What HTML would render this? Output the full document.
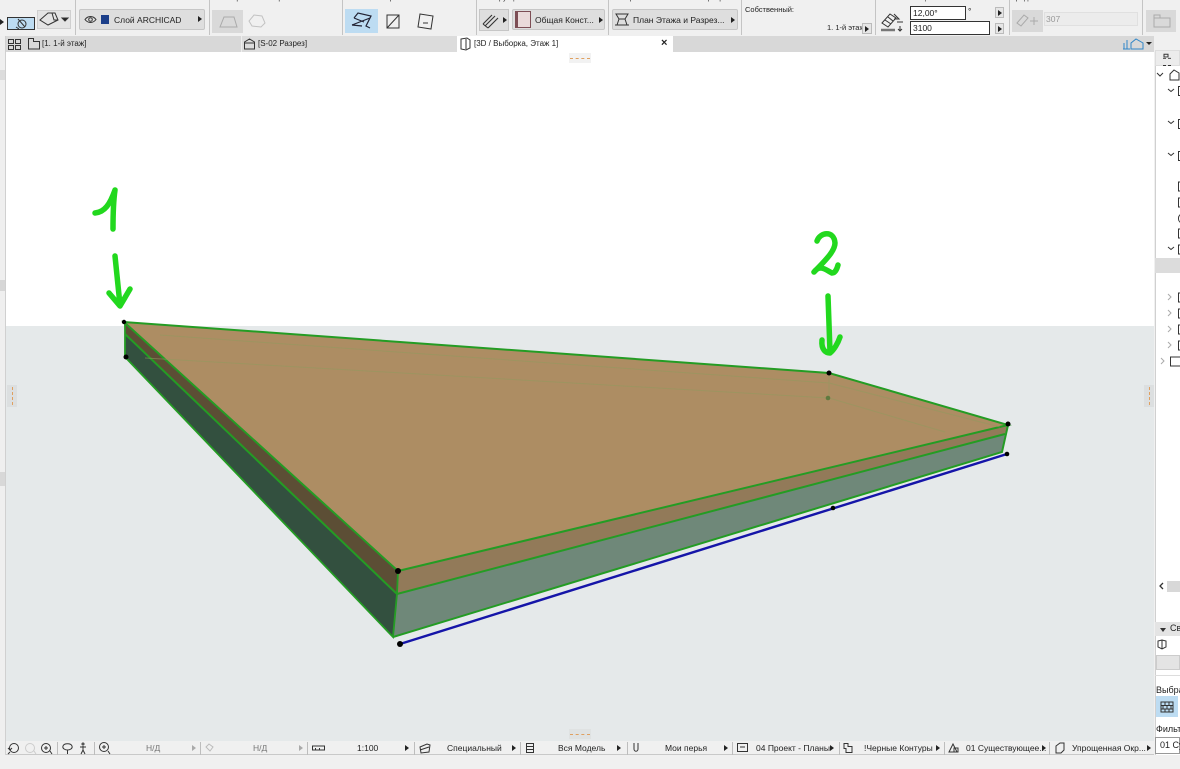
<!DOCTYPE html>
<html lang="ru"><head><meta charset="utf-8"><title>Archicad</title>
<style>
html,body{margin:0;padding:0;background:#f0f0f0}
#p{position:relative;width:1180px;height:769px;overflow:hidden;background:#f0f0f0;font-family:"Liberation Sans","Noto Sans CJK SC",sans-serif;color:#222}
#p div{position:absolute;box-sizing:border-box;white-space:nowrap}
.sep{width:1px;background:#c4c4c4;top:0;height:35px}
.btn{background:#dedede;border:1px solid #c6c6c6;border-radius:2px;font-size:8.5px;line-height:20px;height:21px;top:9px}
.t{font-size:8.5px;line-height:11px}
.l{font-size:7.5px;line-height:10px;top:-7px;color:#333}
.ar{width:0;height:0;border-left:4px solid #222;border-top:3px solid transparent;border-bottom:3px solid transparent}
.sb{width:1px;background:#bdbdbd;top:742px;height:13px}
svg{position:absolute;overflow:visible}
</style></head><body><div id="p">
<!-- toolbar -->
<div class="sep" style="left:75px"></div><div class="sep" style="left:209px"></div><div class="sep" style="left:342px"></div><div class="sep" style="left:476px"></div><div class="sep" style="left:608px"></div><div class="sep" style="left:741px"></div><div class="sep" style="left:875px"></div><div class="sep" style="left:1009px"></div><div class="sep" style="left:1142px"></div>
<div class="l" style="left:80px">Слой:</div><div class="l" style="left:212px">Геометрический вариант:</div><div class="l" style="left:346px">Способ построения:</div><div class="l" style="left:479px">Конструкция:</div><div class="l" style="left:612px">Отображение на плане и в разрезе:</div><div class="l" style="left:745px">Связанный этаж:</div><div class="l" style="left:878px">Уклон и смещение основания:</div><div class="l" style="left:1012px">Градиент:</div><div class="l" style="left:1146px">Базовая:</div>
<div class="ar" style="left:0;top:19px"></div>
<div style="left:7px;top:17px;width:28px;height:13px;background:#bddcf2;border:1px solid #333"></div>
<svg style="left:7px;top:17px" width="28" height="13" fill="none" stroke="#333"><circle cx="15" cy="7" r="4"/><path d="M11 2l7 8M9 10l3 2"/></svg>
<div style="left:37px;top:10px;width:34px;height:19px;background:#e4e4e4;border:1px solid #cfcfcf"></div>
<svg style="left:37px;top:10px" width="34" height="19" fill="none" stroke="#333"><path d="M3 10l8-7h7l3 7-10 5z"/><path d="M15 3l2 7h4"/><path d="M25 8l3 3 3-3z" fill="#222"/></svg>
<div class="btn" style="left:79px;width:126px;padding-left:34px">Слой ARCHICAD</div>
<svg style="left:79px;top:9px" width="36" height="21" fill="none" stroke="#333"><path d="M6 10.500c3-4 8-4 11 0c-3 4-8 4-11 0z"/><circle cx="11.500" cy="10.500" r="1.800"/><rect x="22" y="6" width="8" height="9" fill="#1c3f8a" stroke="none"/></svg>
<div class="ar" style="left:198px;top:16px"></div>
<div style="left:212px;top:10px;width:31px;height:23px;background:#d9d9d9"></div>
<svg style="left:212px;top:10px" width="60" height="22" fill="none" stroke="#aaa"><path d="M8 17l4-10h10l3 10z"/><path d="M40 16l-3-5 5-6 8 1 3 7-4 4z" stroke="#c2c2c2"/></svg>
<div style="left:345px;top:9px;width:33px;height:24px;background:#bddcf2"></div>
<svg style="left:345px;top:9px" width="33" height="24" fill="none" stroke="#223" stroke-width="1.200"><path d="M9 9l4-5 13 3-5 10 4 2M7 16l18-7M9 9l10 4M7 16l10 1"/></svg>
<svg style="left:383px;top:9px" width="55" height="24" fill="none" stroke="#333"><path d="M4 6h12v13H4zM4 19L16 6"/><path d="M37 5l13 2-2 13-13-2zM40 14h5"/></svg>
<div style="left:479px;top:9px;width:30px;height:22px;background:#dedede;border:1px solid #c6c6c6"></div>
<div class="ar" style="left:503px;top:17px"></div>
<svg style="left:479px;top:9px" width="24" height="22" fill="none" stroke="#333" stroke-width="1.100"><path d="M4 15l9-9M6 17l10-10M9 19l10-10M4 15l5 4"/></svg>
<div class="btn" style="left:512px;width:93px;padding-left:22px">Общая Конст...</div>
<div style="left:515px;top:11px;width:16px;height:17px;background:#eadada;border:1px solid #7d4e55;border-left-width:3px"></div>
<div class="ar" style="left:599px;top:17px"></div>
<div class="btn" style="left:612px;width:126px;padding-left:20px">План Этажа и Разрез...</div>
<svg style="left:612px;top:9px" width="20" height="21" fill="none" stroke="#333"><path d="M4 5h12l-3 5H7zM3 16h14M7 10l-2 6M13 10l2 6"/></svg>
<div class="ar" style="left:731px;top:17px"></div>
<div class="t" style="left:745px;top:4px;font-size:7.5px">Собственный:</div>
<div class="t" style="left:827px;top:22px;font-size:7.5px">1. 1-й этаж</div>
<div style="left:862px;top:23px;width:10px;height:11px;background:#e6e6e6;border:1px solid #bbb"></div><div class="ar" style="left:865px;top:26px"></div>
<svg style="left:878px;top:8px" width="30" height="28" fill="none" stroke="#333"><path d="M4 15l8-9 6 4-8 9zM7 12l6 4M10 9l5 4"/><path d="M16 6l5 5h-5M19 14h6"/><path d="M3 22h14" stroke="#777" stroke-width="2.500"/><path d="M22 18v5M20 21l2 2 2-2"/></svg>
<div style="left:910px;top:6px;width:56px;height:14px;background:#fff;border:1px solid #333;font-size:8.5px;line-height:12px;padding-left:2px">12,00°</div>
<div style="left:910px;top:21px;width:80px;height:14px;background:#fff;border:1px solid #333;font-size:8.5px;line-height:12px;padding-left:2px">3100</div>
<div class="t" style="left:968px;top:6px">°</div>
<div style="left:995px;top:7px;width:9px;height:11px;background:#e6e6e6;border:1px solid #bbb"></div><div class="ar" style="left:998px;top:10px"></div>
<div style="left:995px;top:23px;width:9px;height:11px;background:#e6e6e6;border:1px solid #bbb"></div><div class="ar" style="left:998px;top:26px"></div>
<div style="left:1012px;top:10px;width:31px;height:22px;background:#d9d9d9"></div>
<svg style="left:1012px;top:10px" width="31" height="22" fill="none" stroke="#aaa"><path d="M5 13l7-8 4 3-7 8zM18 11h8M22 7v8"/></svg>
<div style="left:1044px;top:12px;width:94px;height:14px;background:#ececec;border:1px solid #e0e0e0;font-size:8.5px;line-height:12px;color:#999;padding-left:1px">307</div>
<div style="left:1146px;top:10px;width:30px;height:22px;background:#d9d9d9"></div>
<svg style="left:1146px;top:10px" width="30" height="22" fill="none" stroke="#aaa"><path d="M8 8h16v9H8zM8 8V5h6v3"/></svg>
<!-- tabs -->
<div style="left:6px;top:36px;width:1149px;height:16px;background:#d8d8d8"></div>
<div style="left:241px;top:36px;width:216px;height:16px;background:#dcdcdc;border-left:1px solid #eee"></div>
<div style="left:457px;top:36px;width:216px;height:16px;background:#fff"></div>
<div class="t" style="left:42px;top:38px;font-size:8px">[1. 1-й этаж]</div>
<div class="t" style="left:258px;top:38px;font-size:8px">[S-02 Разрез]</div>
<div class="t" style="left:474px;top:38px;font-size:8px">[3D / Выборка, Этаж 1]</div>
<div style="left:661px;top:37px;font-size:11px;line-height:12px;font-weight:700">×</div>
<svg style="left:0;top:36px" width="480" height="16" fill="none" stroke="#333"><path d="M8.500 3.500h5v4h-5zM15.500 3.500h5v4h-5zM8.500 9.500h5v4h-5zM15.500 9.500h5v4h-5zM28.500 13V2.500h5v3h6V13zM244.500 13V6l5-3 5 3v7zM244.500 7h10M461 3l6-1 3 2v8l-4 2-5-1zM466 3v10"/></svg>
<svg style="left:1120px;top:36px" width="40" height="16" fill="none" stroke="#2f86c8"><path d="M4 13V7M7 13V4M10 13H3"/><path d="M11 13V7l5-4 7 4v6z"/><path d="M26 6l3 3 3-3z" fill="#222" stroke="none"/></svg>
<!-- viewport -->
<div style="left:6px;top:52px;width:1148px;height:274px;background:#fff"></div>
<div style="left:6px;top:326px;width:1148px;height:415px;background:#e5e9ea"></div>
<div style="left:0;top:36px;width:6px;height:719px;background:#efefef;border-right:1px solid #d0d0d0"></div>
<div style="left:0;top:70px;width:5px;height:10px;background:#dcdcdc"></div>
<div style="left:0;top:280px;width:5px;height:11px;background:#d6d6d6"></div>
<div style="left:0;top:472px;width:5px;height:14px;background:#d8d8d8"></div>
<!-- dashes -->
<div style="left:569px;top:53px;width:22px;height:10px;background:#f2f2f2"></div>
<div style="left:570px;top:58px;width:20px;border-top:1px dashed #dfa060"></div>
<div style="left:569px;top:729px;width:22px;height:10px;background:#dfe2e2"></div>
<div style="left:570px;top:734px;width:20px;border-top:1px dashed #dfa060"></div>
<div style="left:7px;top:385px;width:10px;height:22px;background:#dcdfe0"></div>
<div style="left:12px;top:387px;height:18px;border-left:1px dashed #dfa060"></div>
<div style="left:1144px;top:385px;width:10px;height:22px;background:#dcdfe0"></div>
<div style="left:1149px;top:387px;height:18px;border-left:1px dashed #dfa060"></div>
<!-- model -->
<svg style="left:0;top:0" width="1180" height="769">
<polygon points="124,322 398,571 397,594 125,334" fill="#5c4e35"/>
<polygon points="125,334 397,594 393,637 125,357" fill="#33503f"/>
<polygon points="398,571 1008,425 1005,434 397,594" fill="#927a59"/>
<polygon points="397,594 1005,434 1002,452 393,637" fill="#6f8879"/>
<polygon points="124,322 829,373 1008,425 398,571" fill="#ad8d63"/>
<g fill="none" stroke="#249c24">
<path d="M124 322L829 373L1008 425L398 571Z" stroke-width="2"/>
<path d="M125 322L125 357L393 637L397 594L398 571" stroke-width="1.800"/>
<path d="M125 334L397 594L1005 434M1008 425L1002 452L393 637" stroke-width="2"/>
</g>
<path d="M145 358L829 398L945 432M829 373V398M160 335L829 383L1000 427" fill="none" stroke="#8f9a5f" stroke-width="1" opacity=".55"/>
<path d="M400 644L1007 454" stroke="#1515a8" stroke-width="2.400"/>
<g fill="#000"><circle cx="124" cy="322" r="2.200"/><circle cx="126" cy="357" r="2.500"/><circle cx="829" cy="373" r="2.500"/><circle cx="1008" cy="424" r="2.500"/><circle cx="1007" cy="454" r="2.300"/><circle cx="833" cy="508" r="2.300"/><circle cx="398" cy="571" r="3"/><circle cx="400" cy="644" r="3"/></g>
<circle cx="828" cy="398" r="2.300" fill="#5f7a3f"/>
<g fill="none" stroke="#22d81e" stroke-width="5.500" stroke-linecap="round" stroke-linejoin="round">
<path d="M95 213C105 212 110 204 115 190C113 204 113 218 113 229"/>
<path d="M115 256L120 305M109 293L120 306L130 289"/>
<path d="M817 241C820 232 834 230 835 243C835 250 828 258 814 272C820 264 826 270 832 273C835 273 837 269 838 265"/>
<path d="M828 296L830 352M822 340C821 350 826 353 830 353C834 350 838 343 840 337"/>
</g>
</svg>
<!-- status bar -->
<div style="left:6px;top:754px;width:1149px;height:1px;background:#c9c9c9"></div>
<div class="sb" style="left:57px"></div><div class="sb" style="left:94px"></div><div class="sb" style="left:200px"></div><div class="sb" style="left:307px"></div><div class="sb" style="left:414px"></div><div class="sb" style="left:520px"></div><div class="sb" style="left:627px"></div><div class="sb" style="left:732px"></div><div class="sb" style="left:839px"></div><div class="sb" style="left:944px"></div><div class="sb" style="left:1049px"></div>
<svg style="left:0;top:741px" width="1160" height="14" fill="none" stroke="#333">
<circle cx="14" cy="7" r="4.500"/><path d="M8 7l2 2 2-2M10 11l-2 2"/><circle cx="30" cy="7" r="4.500" stroke="#ccc"/><path d="M34 10l2 3" stroke="#ccc"/><circle cx="46" cy="7" r="4.500"/><path d="M44 7h4M46 5v4M50 10l2 3"/>
<path d="M63 5c1-3 8-3 9 0c1 3-3 4-4.500 4s-5.500-1-4.500-4zM67.500 9v4"/><circle cx="83" cy="3" r="1"/><path d="M80 6h6M83 5v4l-2 4M83 9l2 4"/>
<circle cx="104" cy="6" r="4.500"/><path d="M108 10l2 3M102 6h4M104 4v4"/><path d="M206 6l3-3 4 3-3 4z" stroke="#bbb"/>
<path d="M312.500 5h12v4h-12zM315.500 7v2M319.500 7v2"/><path d="M420 6l7-3 3 1-1 7-8 1zM420 9l9-3"/>
<path d="M526.500 2.500h7v9h-7zM526.500 5.500h7M526.500 8.500h7"/><path d="M634 2v6c0 3 4 3 4 0V2"/>
<rect x="737.500" y="2.500" width="10" height="8"/><path d="M740 6h5"/><path d="M844 2.500h4v3h4v6h-6v-4h-2z"/><path d="M949 11l4-8 4 8zM954 7h4v4h-4z"/><path d="M1056 5l4-3h4v7l-3 3h-5z"/>
</svg>
<div class="t" style="left:146px;top:743px;color:#777">Н/Д</div>
<div class="t" style="left:253px;top:743px;color:#777">Н/Д</div>
<div class="t" style="left:357px;top:743px">1:100</div>
<div class="t" style="left:447px;top:743px">Специальный</div>
<div class="t" style="left:558px;top:743px">Вся Модель</div>
<div class="t" style="left:665px;top:743px">Мои перья</div>
<div class="t" style="left:756px;top:743px">04 Проект - Планы</div>
<div class="t" style="left:864px;top:743px">!Черные Контуры</div>
<div class="t" style="left:966px;top:743px">01 Существующее...</div>
<div class="t" style="left:1072px;top:743px">Упрощенная Окр...</div>
<div class="ar" style="left:192px;top:745px;border-left-color:#aaa"></div><div class="ar" style="left:299px;top:745px;border-left-color:#aaa"></div>
<div class="ar" style="left:405px;top:745px"></div><div class="ar" style="left:512px;top:745px"></div><div class="ar" style="left:617px;top:745px"></div><div class="ar" style="left:724px;top:745px"></div><div class="ar" style="left:830px;top:745px"></div><div class="ar" style="left:936px;top:745px"></div><div class="ar" style="left:1042px;top:745px"></div><div class="ar" style="left:1147px;top:745px"></div>
<!-- right panel -->
<div style="left:1154px;top:36px;width:26px;height:733px;background:#f0f0f0"></div>
<div style="left:1155px;top:66px;width:25px;height:689px;background:#fff;border-left:1px solid #d0d0d0"></div>
<div style="left:1155px;top:258px;width:25px;height:15px;background:#dcdcdc"></div>
<div style="left:1155px;top:50px;width:25px;height:16px;background:#ececec;border:1px solid #ddd"></div>
<svg style="left:1155px;top:36px" width="25" height="345" fill="none" stroke="#333">
<path d="M9 15.500v-3h4v3zM8 17h3M13 17h3M8 25h3M13 25h3" transform="translate(0 7) scale(1 .9)"/>
<path d="M2 37l3 3 3-3M13 53l3 2.500 3-2.500M13 85l3 2.500 3-2.500M13 117l3 2.500 3-2.500M13 211l3 2.500 3-2.500"/>
<path d="M15 44v-6l4-4 5 3v7z"/>
<rect x="23.500" y="50.500" width="8" height="9"/><rect x="23.500" y="83.500" width="8" height="9"/><rect x="23.500" y="115.500" width="8" height="9"/>
<rect x="23.500" y="146" width="8" height="9"/><rect x="23.500" y="162" width="8" height="9"/><rect x="23.500" y="178" width="8" height="9" rx="4"/><rect x="23.500" y="193" width="8" height="9"/><rect x="23.500" y="209" width="8" height="9"/>
<path d="M13 258l3 3-3 3M13 274l3 3-3 3M13 290l3 3-3 3M13 306l3 3-3 3M6 322l3 3-3 3" stroke="#aaa"/>
<rect x="23.500" y="257" width="8" height="9"/><rect x="23.500" y="273" width="8" height="9"/><rect x="23.500" y="289" width="8" height="9"/><rect x="23.500" y="305" width="8" height="9"/><rect x="15.500" y="321" width="12" height="9"/>
</svg>
<svg style="left:1155px;top:581px" width="25" height="10" fill="none" stroke="#333" stroke-width="1.300"><path d="M8 2L5 5l3 3"/></svg>
<div style="left:1167px;top:581px;width:13px;height:11px;background:#d8d8d8"></div>
<div style="left:1155px;top:622px;width:25px;height:14px;background:#e4e4e4"></div>
<div style="left:1160px;top:628px;width:0;height:0;border-top:4px solid #333;border-left:3px solid transparent;border-right:3px solid transparent"></div>
<div class="t" style="left:1170px;top:623px;font-size:9px">Св</div>
<svg style="left:1157px;top:639px" width="12" height="12" fill="none" stroke="#333"><path d="M1 2l4-1 4 1v6l-4 2-4-2zM5 1v9"/></svg>
<div style="left:1156px;top:655px;width:24px;height:15px;background:#e4e4e4;border:1px solid #ccc"></div>
<div style="left:1155px;top:675px;width:25px;height:1px;background:#ddd"></div>
<div class="t" style="left:1156px;top:685px;font-size:9px">Выбра</div>
<div style="left:1156px;top:696px;width:22px;height:21px;background:#bddcf2"></div>
<svg style="left:1160px;top:701px" width="14" height="12" fill="none" stroke="#333"><path d="M1 1h12v10H1zM1 4.500h12M1 8h12M5 1v3.500M9 1v3.500M3 4.500V8M7 4.500V8M11 4.500V8M5 8v3M9 8v3"/></svg>
<div class="t" style="left:1156px;top:724px;font-size:9px">Фильтр</div>
<div style="left:1155px;top:737px;width:25px;height:17px;background:#fff;border:1px solid #999;font-size:9px;line-height:15px;padding-left:4px">01 Су</div>
</div></body></html>
